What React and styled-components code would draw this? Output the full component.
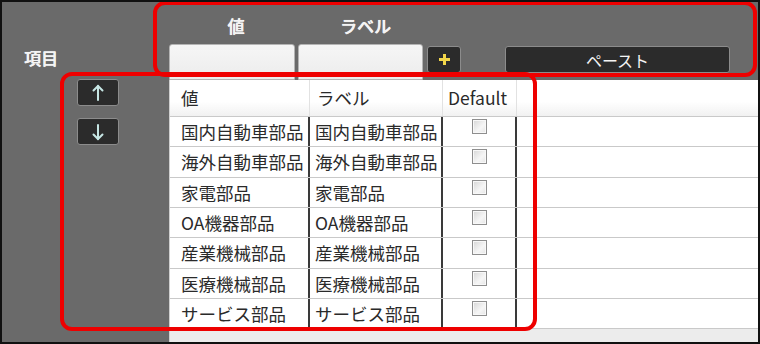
import React from 'react';
import styled, { createGlobalStyle } from 'styled-components';

const Global = createGlobalStyle`
    body {
        margin: 0;
        background: #ffffff;
        font-family: "Noto Sans CJK JP", "Noto Sans", sans-serif;
    }
`

const Frame = styled.div`
    position: relative;
    width: 760px;
    height: 344px;
    box-sizing: border-box;
    border: 2px solid #111;
    background-color: #6a6a6a;
    display: grid;
    grid-template-columns: 167px 1fr;
    grid-template-rows: 78px 1fr;
    overflow: hidden;
`

const LeftCol = styled.div`
    grid-row: 1 / 3;
    display: flex;
    flex-direction: column;
    padding: 46px 0 0 22px;
`

const Label = styled.div`
    color: #f4f4f4;
    font-size: 17px;
    line-height: 20px;
    font-weight: 500;
    text-shadow: 0 0 1px rgba(255, 255, 255, 0.6), 0.3px 0 0 #f4f4f4;
`

const ArrowButton = styled.button`
    width: 42px;
    height: 27px;
    margin-left: 53px;
    margin-top: ${p => p.$top}px;
    padding: 0;
    box-sizing: border-box;
    background-color: #2b2b2b;
    border: 1px solid #8c8c8c;
    border-radius: 3px;
    display: flex;
    justify-content: center;
    align-items: center;
`

const TopPanel = styled.div`
    display: flex;
    flex-direction: column;
    padding-top: 14px;
`

const HeadLabels = styled.div`
    display: flex;
    height: 20px;
`

const HeadLabel = styled(Label)`
    width: ${p => p.$w}px;
    text-align: center;
`

const InputRow = styled.div`
    display: flex;
    align-items: flex-start;
    margin-top: 8px;
`

const Input = styled.div`
    width: ${p => p.$w}px;
    height: 36px;
    margin-left: ${p => p.$ml || 0}px;
    box-sizing: border-box;
    background: linear-gradient(#f6f6f6, #ececec);
    border: 1px solid #b4b4b4;
    border-radius: 3px 3px 0 0;
`

const DarkButton = styled.div`
    width: ${p => p.$w}px;
    height: 27px;
    margin-top: 2px;
    margin-left: ${p => p.$ml}px;
    box-sizing: border-box;
    background-color: #2b2b2b;
    border: 1px solid #8c8c8c;
    border-radius: 3px;
    display: flex;
    justify-content: center;
    align-items: center;
    color: #f4f4f4;
    font-size: 16px;
`

const Table = styled.div`
    display: flex;
    flex-direction: column;
    border-left: 1px solid #cfcfcf;
    background: #ececec;
`

const Row = styled.div`
    display: grid;
    grid-template-columns: 140px 133px 74px 1fr;
    height: ${p => (p.$head ? '36px' : '30.33px')};
    box-sizing: border-box;
    background: ${p => (p.$head ? 'linear-gradient(#ffffff 60%, #f1f1f1)' : '#ffffff')};
    border-top: ${p => (p.$head ? 'none' : '1px solid #c9c9c9')};
`

const Cell = styled.div`
    box-sizing: border-box;
    padding-left: ${p => p.$pl || 0}px;
    border-right: ${p => (p.$line ? (p.$head ? '1px solid #e2e2e2' : '2px solid #3a3a3a') : 'none')};
    font-size: 17.5px;
    line-height: ${p => (p.$head ? '36px' : '29px')};
    color: #2a2a2a;
    white-space: nowrap;
    overflow: hidden;
    display: flex;
    justify-content: ${p => (p.$center ? 'center' : 'flex-start')};
    align-items: ${p => (p.$center ? 'flex-start' : 'stretch')};
`

const Check = styled.div`
    width: 15px;
    height: 15px;
    margin-top: 2px;
    box-sizing: border-box;
    border: 1px solid #8e8e8e;
    background: linear-gradient(135deg, #d6d6d6, #f6f6f6 60%, #e4e4e4);
    box-shadow: inset 0 0 0 1px #f8f8f8;
`

const Filler = styled.div`
    flex: 1;
    background: #ececec;
    border-top: 1px solid #c9c9c9;
`

const Mark = styled.div`
    position: absolute;
    left: ${p => p.$x}px;
    top: ${p => p.$y}px;
    width: ${p => p.$w}px;
    height: ${p => p.$h}px;
    box-sizing: border-box;
    border: 4.5px solid #ee0000;
    border-radius: 12px;
    pointer-events: none;
`

const items = [
    '国内自動車部品',
    '海外自動車部品',
    '家電部品',
    'OA機器部品',
    '産業機械部品',
    '医療機械部品',
    'サービス部品',
];

function Arrow({ down }) {
    return (
        <svg width="12" height="18" viewBox="0 0 12 18">
            <g stroke="#c6e6e4" strokeWidth="2" fill="none" strokeLinecap="round">
                <line x1="6" y1="2" x2="6" y2="16" />
                {down
                    ? <polyline points="1.5,11.5 6,16 10.5,11.5" />
                    : <polyline points="1.5,6.5 6,2 10.5,6.5" />}
            </g>
        </svg>
    )
}

export default function App() {
    return (
        <>
            <Global />
            <Frame>
                <LeftCol>
                    <Label>項目</Label>
                    <ArrowButton $top={11}><Arrow /></ArrowButton>
                    <ArrowButton $top={12}><Arrow down /></ArrowButton>
                </LeftCol>
                <TopPanel>
                    <HeadLabels>
                        <HeadLabel $w={134}>値</HeadLabel>
                        <HeadLabel $w={125}>ラベル</HeadLabel>
                    </HeadLabels>
                    <InputRow>
                        <Input $w={126} />
                        <Input $w={125} $ml={3} />
                        <DarkButton $w={34} $ml={4}>
                            <svg width="11" height="11" viewBox="0 0 11 11">
                                <path d="M4 0h3v4h4v3H7v4H4V7H0V4h4z" fill="#f2d64a" />
                            </svg>
                        </DarkButton>
                        <DarkButton $w={225} $ml={44}>ペースト</DarkButton>
                    </InputRow>
                </TopPanel>
                <Table>
                    <Row $head>
                        <Cell $head $line $pl={11}>値</Cell>
                        <Cell $head $line $pl={7}>ラベル</Cell>
                        <Cell $head $line $pl={5}>Default</Cell>
                        <Cell $head />
                    </Row>
                    {items.map(name => (
                        <Row key={name}>
                            <Cell $line $pl={11}>{name}</Cell>
                            <Cell $line $pl={5}>{name}</Cell>
                            <Cell $line $center><Check /></Cell>
                            <Cell />
                        </Row>
                    ))}
                    <Filler />
                </Table>
                <Mark $x={151} $y={-1} $w={604} $h={76} />
                <Mark $x={58} $y={70} $w={477} $h={259} />
            </Frame>
        </>
    )
}
